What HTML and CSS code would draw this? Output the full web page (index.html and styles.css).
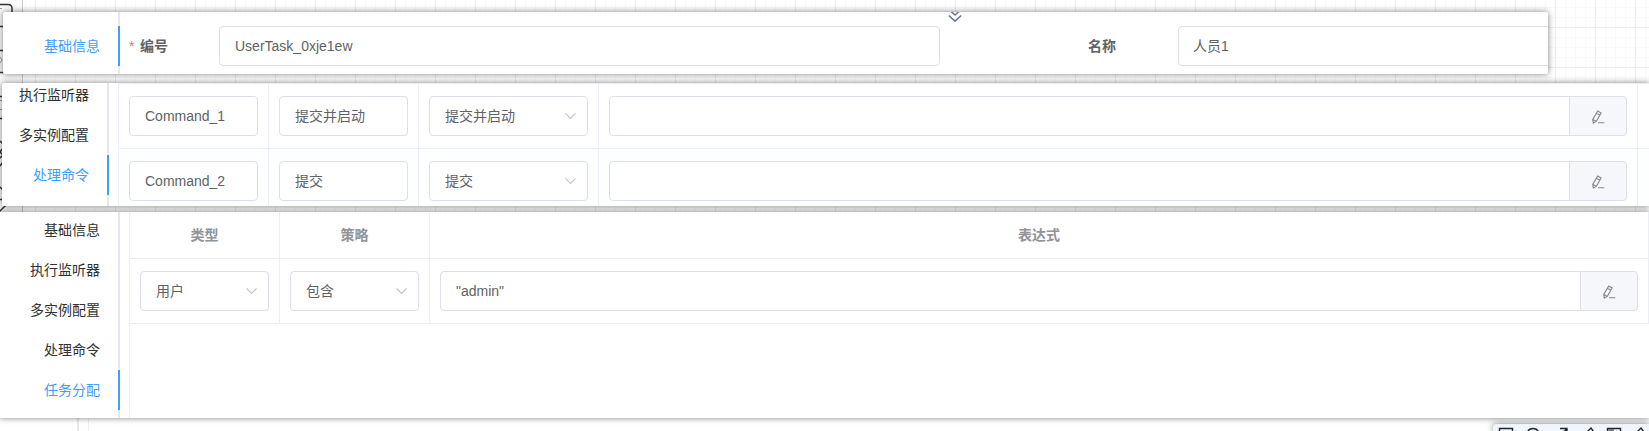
FILE: index.html
```html
<!DOCTYPE html>
<html lang="zh-CN">
<head>
<meta charset="utf-8">
<title>人员1</title>
<link rel="stylesheet" href="styles.css">
</head>
<body>
<svg width="0" height="0" class="defs">
  <symbol id="edit" viewBox="0 0 14 14"><path d="M6.700 1.100l3.400 1.800-4.600 8.200-3.200 2-.6-3.700zM5.500 3.300l3.400 1.900M1.900 9.600l3.200 1.700M7 12.800h6.300"/></symbol>
  <symbol id="down" viewBox="0 0 14 14"><path d="M1.500 4.300l5 5 5-5"/></symbol>
</svg>
<div class="grid"></div>
<svg class="palette" viewBox="0 0 23 212" width="23" height="212">
  <path class="edge" d="M22.500 0v212"/>
  <path d="M0 4.500h8q4 0 4 4V13M0 26.500h4M0 50.500h4M0 72.500h4M0 96.500h3M0 118.500h3M0 141l3 3M3 148l-3 4 3 3-3 3M3 162l-3 4M0 187l3 3M0 199.500h3M-1 212l7-7"/>
  <path class="faint" d="M0 8.500h2M0 57l2 3-2 3M0 100.500h2M0 109.500h2"/>
</svg>

<main class="stack">
  <section class="panel basic">
    <nav class="tabs"><a class="tab active">基础信息</a></nav>
    <div class="form">
      <label class="label required">编号</label>
      <div class="input code">UserTask_0xje1ew</div>
      <label class="label name-label">名称</label>
      <div class="input name">人员1</div>
    </div>
    <svg class="collapse" viewBox="0 0 14 11" width="14" height="11"><path d="M2.500-1L7 3l4.500-4M.8 3.500L7 9.200l6.200-5.700"/></svg>
  </section>

  <section class="panel commands">
    <nav class="tabs">
      <a class="tab">执行监听器</a><a class="tab">多实例配置</a><a class="tab active">处理命令</a>
    </nav>
    <div class="table">
      <div class="row">
        <div class="cell"><div class="input">Command_1</div></div>
        <div class="cell"><div class="input">提交并启动</div></div>
        <div class="cell"><div class="input select">提交并启动<svg class="arrow"><use href="#down"/></svg></div></div>
        <div class="cell"><div class="input group"></div><div class="addon"><svg class="pen"><use href="#edit"/></svg></div></div>
        <div class="cell"></div>
      </div>
      <div class="row striped">
        <div class="cell"><div class="input">Command_2</div></div>
        <div class="cell"><div class="input">提交</div></div>
        <div class="cell"><div class="input select">提交<svg class="arrow"><use href="#down"/></svg></div></div>
        <div class="cell"><div class="input group"></div><div class="addon"><svg class="pen"><use href="#edit"/></svg></div></div>
        <div class="cell"></div>
      </div>
    </div>
  </section>

  <section class="panel assign">
    <nav class="tabs">
      <a class="tab">基础信息</a><a class="tab">执行监听器</a><a class="tab">多实例配置</a><a class="tab">处理命令</a><a class="tab active">任务分配</a>
    </nav>
    <div class="table">
      <div class="row head">
        <div class="cell">类型</div><div class="cell">策略</div><div class="cell">表达式</div>
      </div>
      <div class="row">
        <div class="cell"><div class="input select">用户<svg class="arrow"><use href="#down"/></svg></div></div>
        <div class="cell"><div class="input select">包含<svg class="arrow"><use href="#down"/></svg></div></div>
        <div class="cell"><div class="input group">"admin"</div><div class="addon"><svg class="pen"><use href="#edit"/></svg></div></div>
      </div>
    </div>
  </section>

  <footer class="under">
    <div class="rail"></div><div class="rule"></div>
    <div class="toolbar">
      <svg viewBox="0 0 156 7" width="156" height="7">
        <path d="M6.500 8V4.500h13V8M34.500 8q1.500-3.500 5.500-3.500T45.500 8M67 4.500h7V8M70 8.500l4-4M94 8l4-4 3 4M114.500 8V4.500h13V8M144 8l4-4 3 4"/>
        <path class="fill" d="M115 5h6v3h-6z"/>
      </svg>
    </div>
  </footer>
</main>
</body>
</html>
```

FILE: styles.css
```css
* { box-sizing: border-box; }
body {
  margin: 0;
  width: 1649px;
  height: 431px;
  overflow: hidden;
  position: relative;
  background: #fff;
  font: 14px/40px "Liberation Sans", "Noto Sans CJK SC", sans-serif;
  color: #606266;
}
svg { fill: none; display: block; }
.defs { position: absolute; }

.grid {
  position: absolute;
  inset: 0;
  background-image:
    linear-gradient(90deg, #ebebeb 1px, transparent 1px),
    linear-gradient(#ebebeb 1px, transparent 1px),
    linear-gradient(90deg, #f9f9f9 1px, transparent 1px),
    linear-gradient(#f9f9f9 1px, transparent 1px);
  background-size: 40px 40px, 40px 40px, 10px 10px, 10px 10px;
  background-position: 35px 27px, 35px 27px, 5px 7px, 5px 7px;
}
.palette {
  position: absolute;
  left: 0;
  top: 0;
  background: #fafafa;
  stroke: #333;
  stroke-width: 1.5;
}
.palette .edge { stroke: #ccc; stroke-width: 1; }
.palette .faint { stroke: #999; stroke-width: 1; }

.stack {
  position: relative;
  height: 431px;
  padding-top: 12px;
  display: flex;
  flex-direction: column;
}
.panel {
  display: flex;
  flex: none;
  position: relative;
  background: #fff;
  box-shadow: 0 0 6px rgba(0, 0, 0, .5);
}
.basic { height: 62px; width: 1545px; margin: 0 0 9px 3px; border-radius: 2px; }
.commands { height: 123px; margin: 0 0 6px 2px; border-radius: 2px 0 0 2px; }
.assign { height: 206px; z-index: 1; }

.tabs {
  flex: none;
  border-right: 2px solid #e4e7ed;
  color: #303133;
  text-align: right;
}
.tab { display: block; height: 40px; padding-right: 18px; margin-right: -2px; border-right: 2px solid transparent; }
.tab.active { color: #409eff; border-right-color: #409eff; }
.basic .tabs { width: 117px; padding-top: 14px; }
.commands .tabs { width: 107px; margin-right: 9px; }
.commands .tab:first-child { height: 32px; line-height: 24px; }
.assign .tabs { width: 120px; margin-right: 9px; }
.assign .tab:first-child { height: 38px; line-height: 36px; }

.form { flex: 1; min-width: 0; display: flex; padding: 14px 0 0 9px; overflow: hidden; }
.label { flex: none; font-weight: 700; }
.required { width: 90px; }
.required::before { content: "*"; color: #f56c6c; font-weight: 400; margin-right: 5.5px; }
.name-label { width: 90px; }
.input {
  flex: 1;
  min-width: 0;
  height: 40px;
  padding: 0 15px;
  line-height: 38px;
  border: 1px solid #dcdfe6;
  border-radius: 4px;
  background: #fff;
  white-space: nowrap;
}
.code { flex: 0 0 721px; margin-right: 148px; }
.name { flex: 0 0 721px; padding-left: 14px; }
.collapse { position: absolute; left: 945px; top: 0; stroke: #6b7690; stroke-width: 1.6; }

.table { flex: 1; min-width: 0; border-left: 1px solid #ebeef5; overflow: hidden; }
.commands .table { border-top: 1px solid #ebeef5; }
.row { display: grid; height: 65px; }
.commands .row { grid-template-columns: 150px 150px 180px 1039px 1fr; }
.assign .row { grid-template-columns: 150px 150px 1fr; }
.cell {
  display: flex;
  min-width: 0;
  padding: 12px 10px;
  border-right: 1px solid #ebeef5;
  border-bottom: 1px solid #ebeef5;
}
.commands .cell:last-child { border-right: 0; }
.striped { background: #fdfefe; }
.head { height: 47px; color: #909399; font-weight: 700; }
.head .cell { justify-content: center; align-items: center; padding: 0; }
.select { display: flex; justify-content: space-between; padding-right: 9px; }
.arrow { width: 14px; height: 14px; margin-top: 12px; stroke: #c0c4cc; stroke-width: 1.2; }
.group { border-radius: 4px 0 0 4px; }
.addon {
  width: 58px;
  height: 40px;
  margin-left: -1px;
  display: grid;
  place-items: center;
  background: #f5f7fa;
  border: 1px solid #dcdfe6;
  border-radius: 0 4px 4px 0;
}
.pen { width: 14px; height: 14px; margin-top: 1px; stroke: #85888e; stroke-width: 1.1; }

.under { height: 13px; display: flex; background: #fff; overflow: hidden; }
.rail { width: 2px; margin-left: 77px; background: #e4e7ed; }
.rule { width: 1px; margin-left: 9px; background: #ebeef5; }
.toolbar {
  width: 156px;
  margin: 6px 0 0 auto;
  background: #f1f5fe;
  border-radius: 3px 0 0 0;
  box-shadow: 0 0 6px rgba(0, 0, 0, .5);
  stroke: #22242a;
  stroke-width: 1.4;
}
.toolbar .fill { fill: #777a88; stroke: none; }
```
